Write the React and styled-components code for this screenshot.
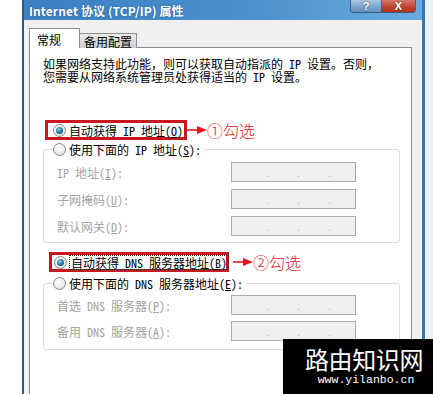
import React from "react";
import styled, { createGlobalStyle, css } from "styled-components";

const GlobalStyle = createGlobalStyle`
  html, body { margin: 0; padding: 0; }
  body { background: #fff; }
  #root { width: 433px; height: 394px; overflow: hidden; position: relative; }
`;

const uiFont = `"Noto Sans Mono CJK SC", "Noto Sans CJK SC", "Liberation Sans", sans-serif`;

const Page = styled.div`
  width: 433px;
  height: 394px;
  display: flex;
  padding-left: 22px;
  box-sizing: border-box;
  background: linear-gradient(90deg, #ffffff 0%, #ffffff 90%, #e9f1f9 100%);
  position: relative;
  font-family: ${uiFont};
  font-size: 12px;
`;

const Window = styled.div`
  width: 403px;
  height: 400px;
  display: flex;
  flex-direction: column;
  border-left: 2px solid #2a5983;
  border-right: 3px solid #3676b3;
  box-sizing: border-box;
  background: #f0f0f0;
`;

const TitleBar = styled.div`
  height: 20px;
  flex: none;
  display: flex;
  align-items: center;
  padding-left: 5px;
  background: linear-gradient(90deg, #3a80c2 0%, #4a90cd 55%, #69abdf 100%);
`;

const Title = styled.div`
  color: #fff;
  font-family: "Noto Sans CJK SC", "Liberation Sans", sans-serif;
  font-weight: 700;
  font-size: 12px;
  letter-spacing: 0.1px;
  text-shadow: 0 0 2px rgba(20, 60, 110, 0.6);
`;

const CaptionButtons = styled.div`
  margin-left: auto;
  margin-right: 6px;
  align-self: flex-start;
  display: flex;
  border: 1px solid #3b5f86;
  border-top: none;
  border-radius: 0 0 4px 4px;
  overflow: hidden;
`;

const CaptionButton = styled.div`
  height: 12px;
  width: ${(p) => p.$w}px;
  display: flex;
  align-items: center;
  justify-content: center;
  color: #fff;
  font-family: "Liberation Sans", sans-serif;
  font-weight: 700;
  font-size: 11px;
  line-height: 1;
  text-shadow: 0 0 2px #333;
  ${(p) =>
    p.$close
      ? css`
          background: linear-gradient(180deg, #d47a68 0%, #c0412b 60%, #b3321d 100%);
        `
      : css`
          background: linear-gradient(180deg, #a9c6e3 0%, #7aa3cb 60%, #6690bd 100%);
          border-right: 1px solid #3b5f86;
        `}
`;

const Body = styled.div`
  flex: 1;
  display: flex;
  flex-direction: column;
  padding: 8px 10px 0 5px;
`;

const Tabs = styled.div`
  display: flex;
  align-items: flex-end;
  height: 20px;
  position: relative;
  z-index: 1;
`;

const Tab = styled.div`
  box-sizing: border-box;
  border: 1px solid #898c95;
  border-bottom: none;
  color: #000;
  ${(p) =>
    p.$active
      ? css`
          height: 20px;
          width: 51px;
          padding: 2px 0 0 7px;
          background: #fff;
        `
      : css`
          height: 15px;
          width: 57px;
          padding: 0 0 0 4px;
          line-height: 15px;
          border-left: none;
          background: linear-gradient(180deg, #ececec 0%, #dcdcdc 50%, #cfcfcf 100%);
        `}
`;

const Panel = styled.div`
  flex: 1;
  margin-top: -1px;
  border: 1px solid #898c95;
  background: #fff;
  padding: 9px 11px 0 13px;
  display: flex;
  flex-direction: column;
`;

const Intro = styled.p`
  margin: 0;
  line-height: 13px;
  color: #000;
`;

const OptionRow = styled.div`
  display: flex;
  align-items: center;
  margin-top: ${(p) => p.$mt}px;
`;

const Highlight = styled.div`
  display: flex;
  align-items: center;
  height: 20px;
  box-sizing: border-box;
  border: 3px solid #c9161f;
  padding: 0 2px 0 ${(p) => p.$pl}px;
  margin-left: ${(p) => p.$ml}px;
  margin-right: ${(p) => p.$mr || 0}px;
  width: ${(p) => p.$w}px;
`;

const Radio = styled.span`
  flex: none;
  width: 13px;
  height: 13px;
  box-sizing: border-box;
  border-radius: 50%;
  border: 1px solid #8a8a8a;
  background: radial-gradient(circle at 40% 35%, #ffffff 0%, #eeeeee 50%, #d2d2d2 100%);
  position: relative;
  ${(p) =>
    p.$checked &&
    css`
      &::after {
        content: "";
        position: absolute;
        left: 2px;
        top: 2px;
        width: 7px;
        height: 7px;
        border-radius: 50%;
        background: radial-gradient(circle at 40% 35%, #8fd8f2 0%, #2d7fa8 45%, #0e3f66 100%);
      }
    `}
`;

const Label = styled.span`
  margin-left: 3px;
  line-height: 13px;
  white-space: nowrap;
  color: ${(p) => (p.$disabled ? "#a3a3a3" : "#000")};
  ${(p) =>
    p.$focus &&
    css`
      outline: 1px dotted #222;
      outline-offset: 0;
      padding: 0 1px;
    `}
  u {
    text-decoration: underline;
    text-underline-offset: 1px;
  }
`;

const Note = styled.span`
  display: flex;
  align-items: center;
  color: #e3151c;
  font-family: "Noto Sans CJK SC", sans-serif;
  font-weight: 300;
  font-size: 16px;
  line-height: 18px;
  white-space: nowrap;
`;

const Group = styled.fieldset`
  margin: ${(p) => p.$mt}px 0 0 0;
  width: 357px;
  box-sizing: border-box;
  border: 1px solid #d5dfe5;
  border-radius: 3px;
  padding: ${(p) => p.$pt}px 0 ${(p) => p.$pb}px 13px;
  display: grid;
  grid-template-columns: 174px 125px;
  row-gap: ${(p) => p.$gap}px;
  align-items: center;
`;

const Legend = styled.legend`
  display: flex;
  align-items: center;
  margin-left: -5px;
  padding: 0 3px 0 1px;
  height: 14px;
`;

const FieldLabel = styled.span`
  color: #a3a3a3;
  white-space: nowrap;
  line-height: 13px;
`;

const IpBox = styled.div`
  height: 20px;
  box-sizing: border-box;
  border: 1px solid #ababab;
  background: #f0f0f0;
  display: flex;
  align-items: center;
  padding-left: 33px;
  gap: 29px;
  color: #b5b5b5;
  font-size: 10px;
  span { width: 2px; text-align: center; }
`;

const Watermark = styled.div`
  position: absolute;
  left: 283px;
  top: 339px;
  width: 150px;
  height: 55px;
  background: #000;
  display: flex;
  flex-direction: column;
  align-items: center;
  padding-top: 7px;
  box-sizing: border-box;
`;

const WmTitle = styled.div`
  color: #fff;
  font-family: "Noto Sans CJK SC", sans-serif;
  font-size: 24px;
  line-height: 25px;
  margin-left: 12px;
  letter-spacing: -0.4px;
`;

const WmUrl = styled.div`
  color: #fff;
  font-family: "Liberation Mono", monospace;
  font-size: 11.5px;
  line-height: 13px;
  margin-top: 2px;
  margin-left: 16px;
`;

const Arrow = ({ width }) => (
  <svg width={width} height="10" viewBox={`0 0 ${width} 10`} style={{ flex: "none" }}>
    <line x1="0" y1="5" x2={width - 8} y2="5" stroke="#e3151c" strokeWidth="1.6" />
    <polygon points={`${width - 10},1 ${width},5 ${width - 10},9`} fill="#e3151c" />
  </svg>
);

const IpField = () => (
  <IpBox>
    <span>.</span>
    <span>.</span>
    <span>.</span>
  </IpBox>
);

export default function App() {
  return (
    <>
      <GlobalStyle />
      <Page>
        <Window>
          <TitleBar>
            <Title>Internet 协议 (TCP/IP) 属性</Title>
            <CaptionButtons>
              <CaptionButton $w={30}>?</CaptionButton>
              <CaptionButton $w={33} $close>
                X
              </CaptionButton>
            </CaptionButtons>
          </TitleBar>
          <Body>
            <Tabs>
              <Tab $active>常规</Tab>
              <Tab>备用配置</Tab>
            </Tabs>
            <Panel>
              <Intro>
                如果网络支持此功能，则可以获取自动指派的 IP 设置。否则，
                <br />
                您需要从网络系统管理员处获得适当的 IP 设置。
              </Intro>

              <OptionRow $mt={37}>
                <Highlight $ml={2} $pl={5} $w={142}>
                  <Radio $checked />
                  <Label>
                    自动获得 IP 地址(<u>O</u>)
                  </Label>
                </Highlight>
                <Arrow width={20} />
                <Note>①勾选</Note>
              </OptionRow>

              <Group $mt={2} $pt={6} $pb={6} $gap={7}>
                <Legend>
                  <Radio />
                  <Label>
                    使用下面的 IP 地址(<u>S</u>):
                  </Label>
                </Legend>
                <FieldLabel>
                  IP 地址(<u>I</u>):
                </FieldLabel>
                <IpField />
                <FieldLabel>
                  子网掩码(<u>U</u>):
                </FieldLabel>
                <IpField />
                <FieldLabel>
                  默认网关(<u>D</u>):
                </FieldLabel>
                <IpField />
              </Group>

              <OptionRow $mt={9}>
                <Highlight $ml={6} $pl={2} $w={180} $mr={4}>
                  <Radio $checked />
                  <Label $focus>
                    自动获得 DNS 服务器地址(<u>B</u>)
                  </Label>
                </Highlight>
                <Arrow width={20} />
                <Note>②勾选</Note>
              </OptionRow>

              <Group $mt={4} $pt={5} $pb={8} $gap={6}>
                <Legend>
                  <Radio />
                  <Label>
                    使用下面的 DNS 服务器地址(<u>E</u>):
                  </Label>
                </Legend>
                <FieldLabel>
                  首选 DNS 服务器(<u>P</u>):
                </FieldLabel>
                <IpField />
                <FieldLabel>
                  备用 DNS 服务器(<u>A</u>):
                </FieldLabel>
                <IpField />
              </Group>
            </Panel>
          </Body>
        </Window>
        <Watermark>
          <WmTitle>路由知识网</WmTitle>
          <WmUrl>www.yilanbo.cn</WmUrl>
        </Watermark>
      </Page>
    </>
  );
}
